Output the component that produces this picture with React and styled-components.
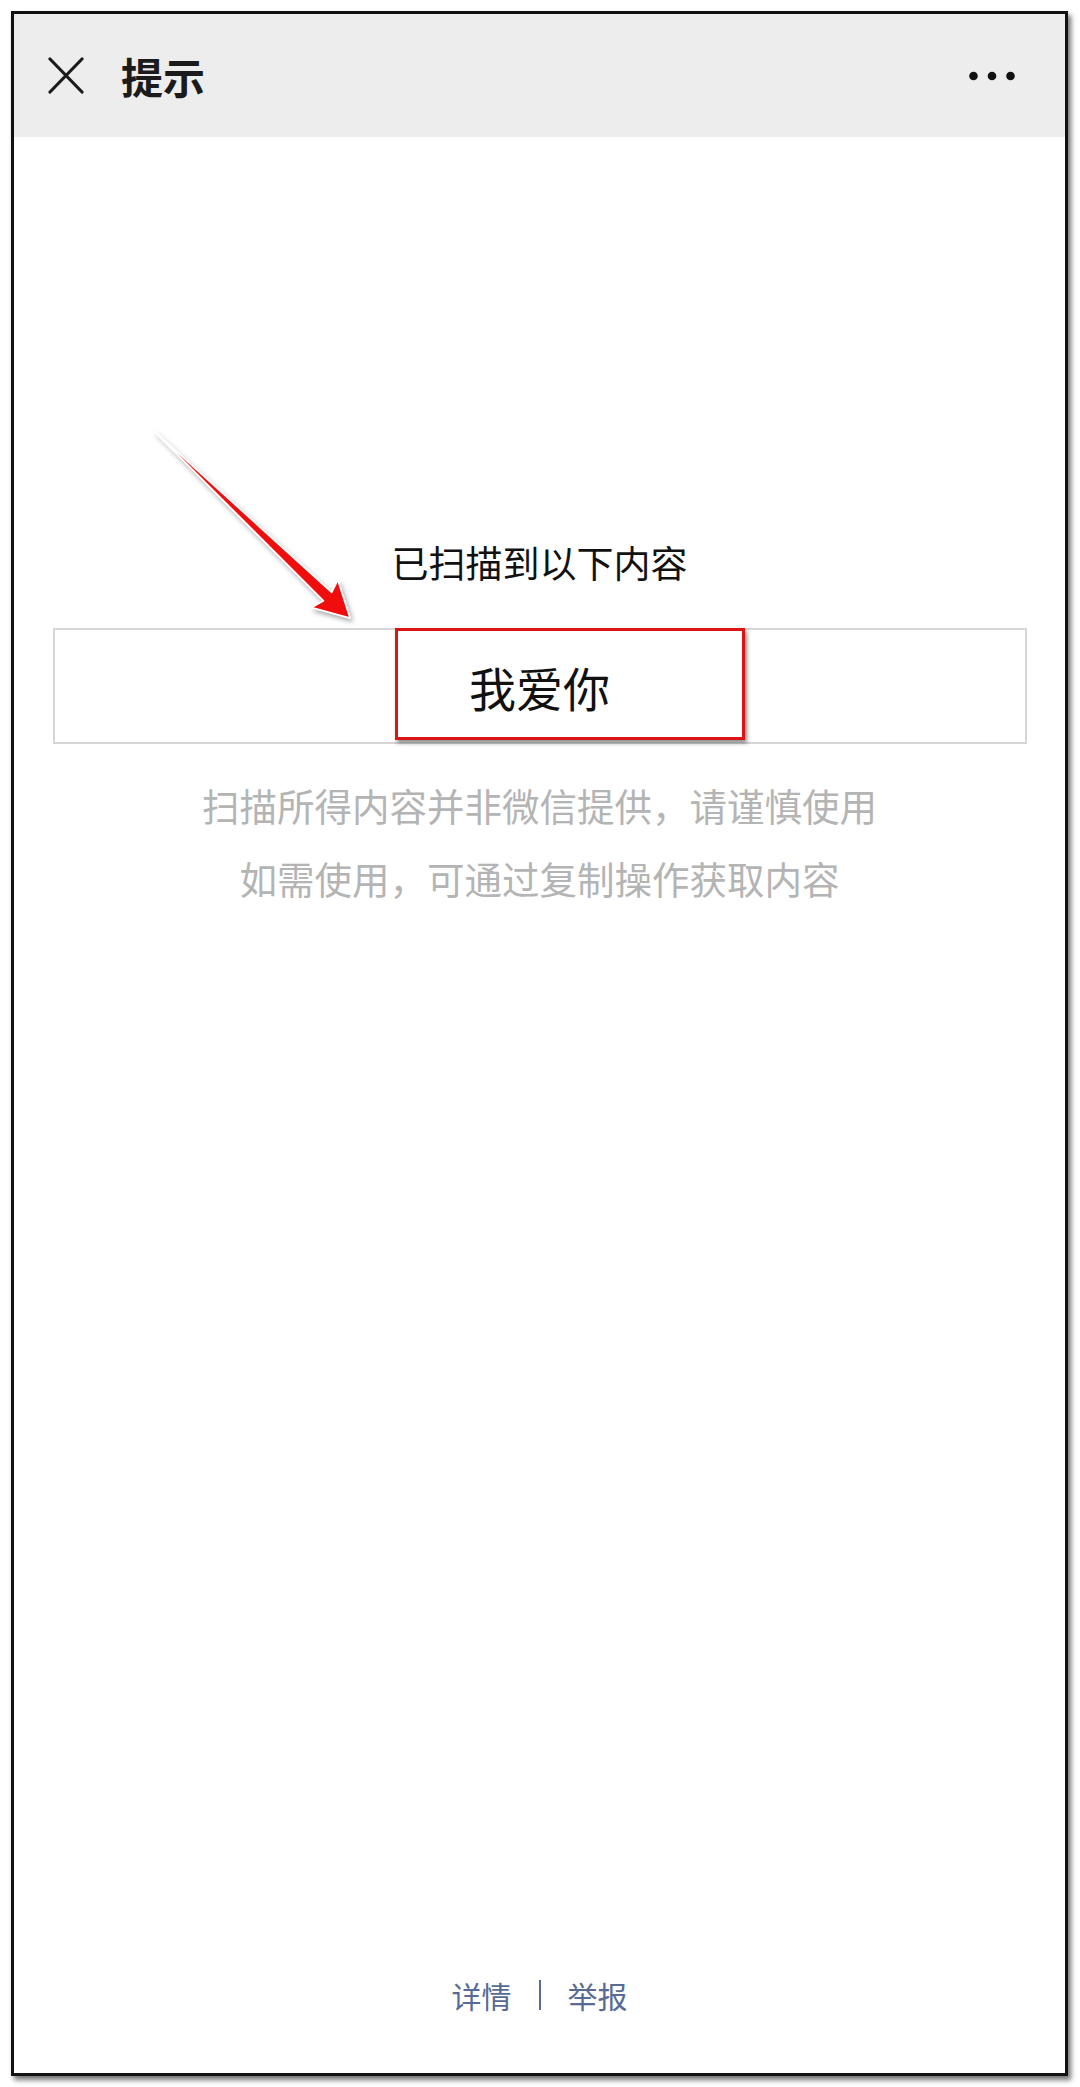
import React from "react";
import styled, { createGlobalStyle } from "styled-components";

const GlobalStyle = createGlobalStyle`
  html, body {
    margin: 0;
    padding: 0;
    background: #ffffff;
  }
  body {
    font-family: "Noto Sans CJK SC", "Noto Sans", sans-serif;
  }
`;

const Page = styled.div`
  width: 1080px;
  height: 2087px;
  padding: 11px 0 0 11px;
  box-sizing: border-box;
  background: #ffffff;
`;

const Frame = styled.div`
  position: relative;
  width: 1057px;
  height: 2065px;
  box-sizing: border-box;
  border: 3px solid #111;
  box-shadow: 3px 4px 5px rgba(0, 0, 0, 0.55);
  display: flex;
  flex-direction: column;
  background: #fff;
`;

const Header = styled.div`
  height: 123px;
  flex-shrink: 0;
  background: #ededed;
  display: flex;
  align-items: center;
  padding: 0 50px 0 34px;
`;

const Title = styled.div`
  margin-left: 37px;
  font-size: 42px;
  font-weight: 600;
  color: #1b1b1b;
  line-height: 1;
`;

const Spacer = styled.div`
  flex: 1;
`;

const Main = styled.div`
  flex: 1;
  display: flex;
  flex-direction: column;
  align-items: center;
  padding-top: 400px;
`;

const Heading = styled.div`
  font-size: 37px;
  line-height: 50px;
  color: #111;
`;

const ResultBox = styled.div`
  margin-top: 41px;
  width: 974px;
  height: 116px;
  box-sizing: border-box;
  border: 2px solid #d6d6d6;
  display: flex;
  align-items: center;
  justify-content: center;
  font-size: 47px;
  color: #111;
`;

const Notice = styled.div`
  margin-top: 24px;
  font-size: 37.5px;
  line-height: 73px;
  color: #b4b4b4;
  text-align: center;
`;

const Footer = styled.div`
  display: flex;
  justify-content: center;
  align-items: center;
  gap: 27px;
  padding-bottom: 58px;
  font-size: 30px;
  line-height: 40px;
  color: #576b95;
`;

const Sep = styled.span`
  width: 2px;
  height: 30px;
  background: #576b95;
`;

const Highlight = styled.div`
  position: absolute;
  left: 381px;
  top: 614px;
  width: 350px;
  height: 112px;
  box-sizing: border-box;
  border: 3.5px solid #dc1414;
  box-shadow: 2px 3px 4px rgba(0, 0, 0, 0.45);
`;

const ArrowSvg = styled.svg`
  position: absolute;
  left: 120px;
  top: 400px;
  overflow: visible;
`;

const CloseIcon = () => (
  <svg width="36" height="37" viewBox="0 0 36 37">
    <path d="M2 2 L34 35 M34 2 L2 35" stroke="#1b1b1b" strokeWidth="3.2" strokeLinecap="round" />
  </svg>
);

const MoreIcon = () => (
  <svg width="46" height="10" viewBox="0 0 46 10">
    <circle cx="4.5" cy="5" r="4.3" fill="#111" />
    <circle cx="23" cy="5" r="4.3" fill="#111" />
    <circle cx="41.5" cy="5" r="4.3" fill="#111" />
  </svg>
);

const Arrow = () => (
  <ArrowSvg width="250" height="230" viewBox="0 0 250 230">
    <defs>
      <filter id="sh" x="-20%" y="-20%" width="150%" height="150%">
        <feDropShadow dx="2" dy="3" stdDeviation="2.5" floodColor="#000" floodOpacity="0.35" />
      </filter>
    </defs>
    <polygon
      points="20.5,17.5 197.7,178.3 203.8,166.1 216,204 177.6,193.6 189.5,186.9"
      fill="#f01010"
      stroke="#ffffff"
      strokeWidth="1.6"
      strokeLinejoin="round"
      filter="url(#sh)"
    />
  </ArrowSvg>
);

export default function App() {
  return (
    <>
      <GlobalStyle />
      <Page>
        <Frame>
          <Header>
            <CloseIcon />
            <Title>提示</Title>
            <Spacer />
            <MoreIcon />
          </Header>
          <Main>
            <Heading>已扫描到以下内容</Heading>
            <ResultBox>我爱你</ResultBox>
            <Notice>
              扫描所得内容并非微信提供，请谨慎使用
              <br />
              如需使用，可通过复制操作获取内容
            </Notice>
          </Main>
          <Footer>
            <span>详情</span>
            <Sep />
            <span>举报</span>
          </Footer>
          <Arrow />
          <Highlight />
        </Frame>
      </Page>
    </>
  );
}
